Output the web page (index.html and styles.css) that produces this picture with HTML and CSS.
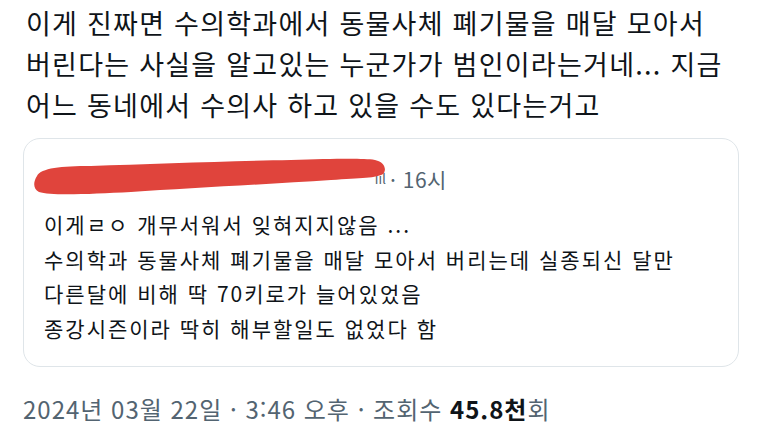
FILE: index.html
```html
<!doctype html>
<html lang="ko">
  <head>
    <meta charset="UTF-8" />
    <meta name="viewport" content="width=device-width, initial-scale=1.0" />
    <title>Post</title>
    <link rel="stylesheet" href="styles.css">
  </head>

  <body>
    <div class="post">
      <!-- Post text -->
      <p class="post-text">
        이게 진짜면 수의학과에서 동물사체 폐기물을 매달 모아서<br />
        버린다는 사실을 알고있는 누군가가 범인이라는거네... 지금<br />
        어느 동네에서 수의사 하고 있을 수도 있다는거고
      </p>

      <!-- Quoted post -->
      <div class="quote">
        <div class="quote-head">
          <span class="name-wrap">
            <span class="name">ııl</span>
            <svg class="scribble" width="356" height="42" viewBox="0 0 356 42">
              <path
                d="M6 20 C10 12 30 10 60 10 C120 8 200 5 260 4 C300 3 330 2 344 4 C354 6 356 14 352 18 C346 22 330 22 300 24 C240 28 160 32 100 36 C60 38 20 40 8 36 C2 33 2 26 6 20 Z"
                fill="#e0443c"
              />
            </svg>
          </span>
          <span class="meta">· 16시</span>
        </div>
        <p class="quote-text">
          이게ㄹㅇ 개무서워서 잊혀지지않음 ...<br />
          수의학과 동물사체 폐기물을 매달 모아서 버리는데 실종되신 달만<br />
          다른달에 비해 딱 70키로가 늘어있었음<br />
          종강시즌이라 딱히 해부할일도 없었다 함
        </p>
      </div>

      <!-- Footer -->
      <div class="post-info">
        2024년 03월 22일 · 3:46 오후 · 조회수 <b class="count">45.8천</b>회
      </div>
    </div>
  </body>
</html>
```

FILE: styles.css
```css
body {
  margin: 0;
  background: #ffffff;
  color: #0f1419;
  font-family: "Noto Sans CJK KR", "Noto Sans", sans-serif;
}

.post {
  padding: 2px 22px 0 23px;
}

.post-text {
  margin: 0 0 0 3px;
  font-size: 27px;
  line-height: 41px;
  letter-spacing: 1.25px;
}

.quote {
  margin-top: 13px;
  width: 675px;
  padding: 17px 19px 21px 20px;
  border: 1px solid #dfe5e9;
  border-radius: 17px;
}

.quote-head {
  display: flex;
  align-items: center;
  height: 42px;
  color: #536471;
  font-size: 21px;
}

.name-wrap {
  position: relative;
  width: 344px;
  height: 42px;
}

.name {
  position: absolute;
  right: 2px;
  top: 12px;
  font-size: 14px;
}

.scribble {
  position: absolute;
  left: -13px;
  top: 0;
}

.meta {
  margin-left: 2px;
  margin-top: 4px;
  letter-spacing: 0.5px;
}

.quote-text {
  margin: 9px 0 0;
  font-size: 21px;
  line-height: 34.5px;
  letter-spacing: 2px;
}

.post-info {
  margin-top: 27px;
  color: #536471;
  font-size: 24px;
  line-height: 30px;
  letter-spacing: 1px;
}

.count {
  color: #0f1419;
  font-weight: 700;
}
```
